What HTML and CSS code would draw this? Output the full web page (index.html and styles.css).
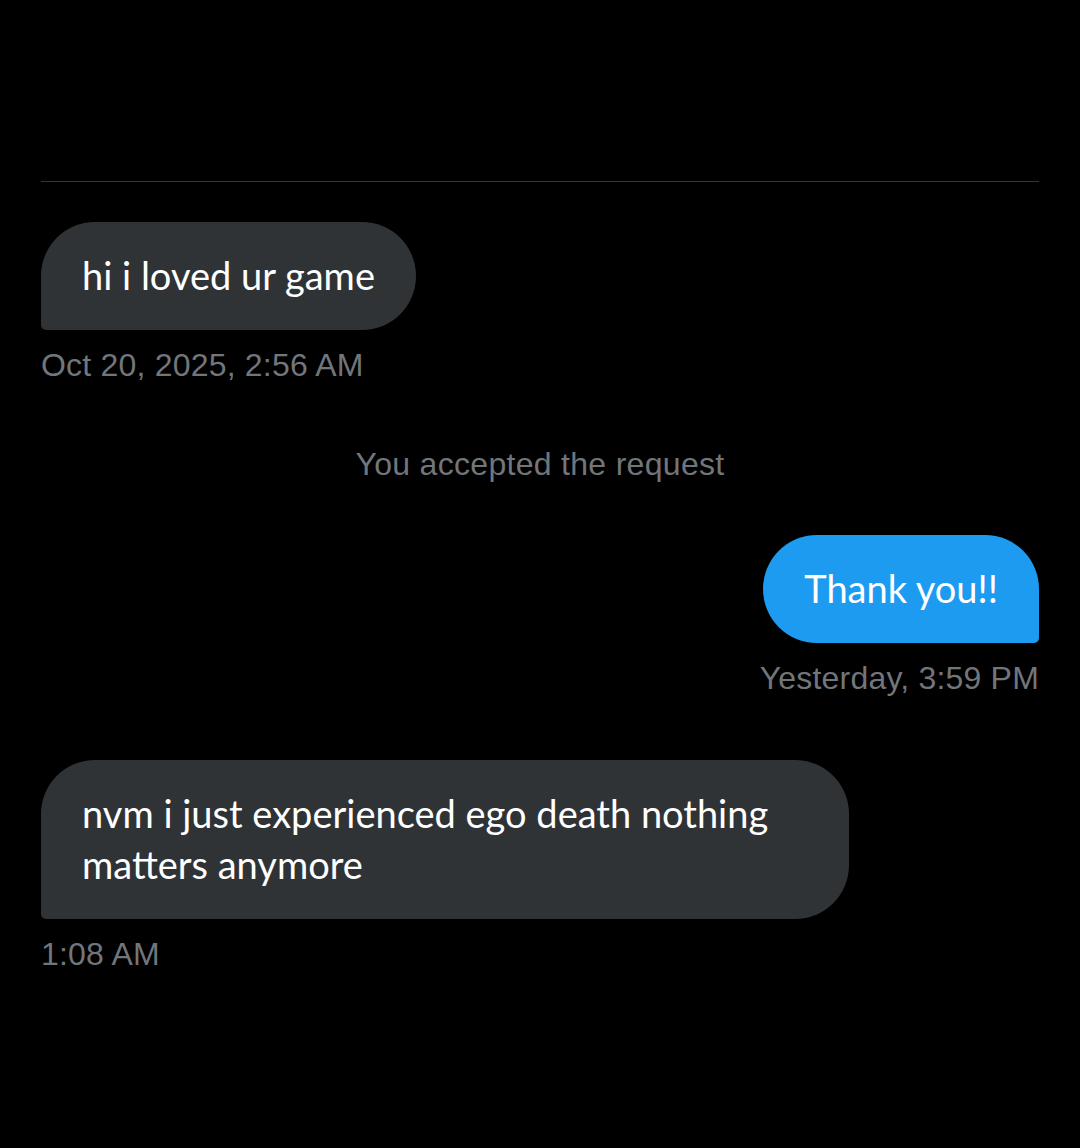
FILE: index.html
```html
<!DOCTYPE html>
<html>
    <head>
        <meta charset="UTF-8">
        <meta name="viewport" content="width=device-width, initial-scale=1.0">
        <title>Messages</title>
        <link rel="stylesheet" href="styles.css">
    </head>
    <body>
        <div id="thread">
            <div class="top"></div>
            <div class="msg them first">
                <div class="bubble">hi i loved ur game</div>
                <div class="time">Oct 20, 2025, 2:56 AM</div>
            </div>
            <div class="notice">You accepted the request</div>
            <div class="msg me">
                <div class="bubble">Thank you!!</div>
                <div class="time">Yesterday, 3:59 PM</div>
            </div>
            <div class="msg them last">
                <div class="bubble">nvm i just experienced ego death nothing matters anymore</div>
                <div class="time">1:08 AM</div>
            </div>
        </div>
    </body>
</html>
```

FILE: styles.css
```css
body {
    margin:0;
    background-color:#000;
}
#thread {
    padding:0 41px 0 41px;
    height:1148px;
    box-sizing:border-box;
}
.top {
    height:181px;
    border-bottom:1px solid #333639;
}
.msg {
    display:flex;
    flex-direction:column;
}
.msg.them {align-items:flex-start;}
.msg.me {
    align-items:flex-end;
    margin-top:51px;
}
.msg.first {margin-top:40px;}
.msg.last {margin-top:62px;}
.bubble {
    font-family:Lato, "Open Sans", sans-serif;
    font-size:38px;
    line-height:51px;
    color:#fff;
    padding:28px 41px 29px 41px;
    max-width:726px;
    border-radius:54px 54px 54px 5px;
    background-color:#2f3336;
}
.me .bubble {
    background-color:#1d9bf0;
    border-radius:54px 54px 5px 54px;
}
.time {
    font-family:"Liberation Sans", Arial, sans-serif;
    font-size:32px;
    line-height:40px;
    letter-spacing:0.2px;
    color:#71767b;
    margin-top:15px;
}
.notice {
    font-family:"Liberation Sans", Arial, sans-serif;
    font-size:32px;
    line-height:40px;
    letter-spacing:0.3px;
    color:#71767b;
    text-align:center;
    margin-top:59px;
}
```
